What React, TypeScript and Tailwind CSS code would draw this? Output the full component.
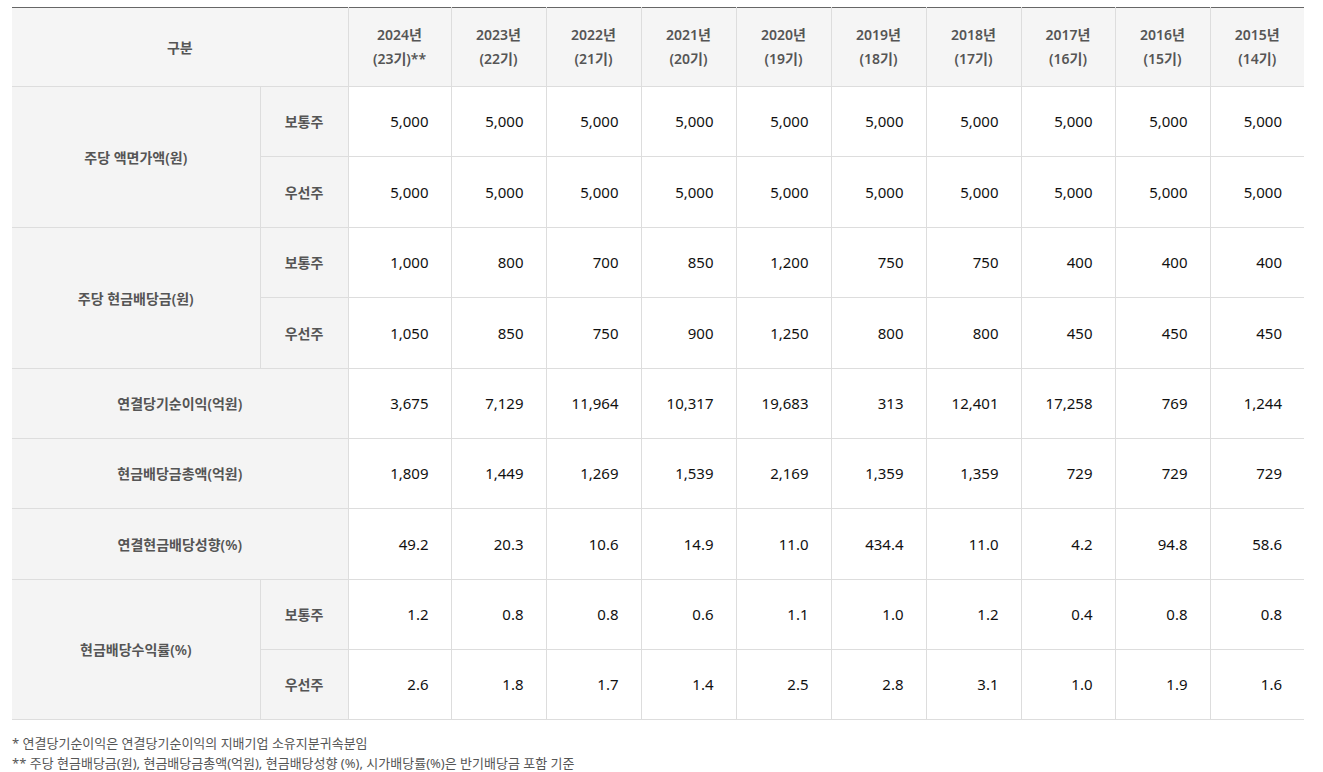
import type { ReactNode } from 'react'

const years = [
  ['2024년', '(23기)**'],
  ['2023년', '(22기)'],
  ['2022년', '(21기)'],
  ['2021년', '(20기)'],
  ['2020년', '(19기)'],
  ['2019년', '(18기)'],
  ['2018년', '(17기)'],
  ['2017년', '(16기)'],
  ['2016년', '(15기)'],
  ['2015년', '(14기)'],
]

const colWidths = [248, 88, 103, 95, 95, 95, 95, 95, 95, 94, 95, 94]

const rows = {
  faceCommon: ['5,000', '5,000', '5,000', '5,000', '5,000', '5,000', '5,000', '5,000', '5,000', '5,000'],
  facePref: ['5,000', '5,000', '5,000', '5,000', '5,000', '5,000', '5,000', '5,000', '5,000', '5,000'],
  divCommon: ['1,000', '800', '700', '850', '1,200', '750', '750', '400', '400', '400'],
  divPref: ['1,050', '850', '750', '900', '1,250', '800', '800', '450', '450', '450'],
  netIncome: ['3,675', '7,129', '11,964', '10,317', '19,683', '313', '12,401', '17,258', '769', '1,244'],
  divTotal: ['1,809', '1,449', '1,269', '1,539', '2,169', '1,359', '1,359', '729', '729', '729'],
  payout: ['49.2', '20.3', '10.6', '14.9', '11.0', '434.4', '11.0', '4.2', '94.8', '58.6'],
  yieldCommon: ['1.2', '0.8', '0.8', '0.6', '1.1', '1.0', '1.2', '0.4', '0.8', '0.8'],
  yieldPref: ['2.6', '1.8', '1.7', '1.4', '2.5', '2.8', '3.1', '1.0', '1.9', '1.6'],
}

// 라벨 셀 (구분 열)
const labelCls =
  'bg-[#f4f4f4] border-b border-r border-[#dddddd] text-center text-[14px] font-semibold text-[#555555]'

function Label({ children, rowSpan, colSpan }: { children: ReactNode; rowSpan?: number; colSpan?: number }) {
  return (
    <th rowSpan={rowSpan} colSpan={colSpan} className={labelCls}>
      {children}
    </th>
  )
}

function Values({ values }: { values: string[] }) {
  return (
    <>
      {values.map((v, i) => (
        <td
          key={i}
          className={
            'border-b border-[#dddddd] pr-[22px] text-right text-[15px] text-[#111111] ' +
            (i < values.length - 1 ? 'border-r' : '')
          }
        >
          {v}
        </td>
      ))}
    </>
  )
}

export default function App() {
  return (
    <div
      className="bg-white pt-[7px] pl-[12px] pr-[19px]"
      style={{ fontFamily: '"Noto Sans", "Noto Sans CJK KR", sans-serif' }}
    >
      <table className="w-[1292px] table-fixed border-collapse border-t border-[#666666]">
        <colgroup>
          {colWidths.map((w, i) => (
            <col key={i} style={{ width: w }} />
          ))}
        </colgroup>
        <thead>
          <tr className="h-[79px] bg-[#f5f5f5]">
            <th colSpan={2} className="border-b border-r border-[#dddddd] text-center text-[14px] font-semibold text-[#555555]">
              구분
            </th>
            {years.map(([y, p], i) => (
              <th
                key={y}
                className={
                  'border-b border-[#dddddd] text-center text-[14px] font-semibold leading-[24px] text-[#555555] ' +
                  (i < years.length - 1 ? 'border-r' : '')
                }
              >
                <div>{y}</div>
                <div>{p}</div>
              </th>
            ))}
          </tr>
        </thead>
        <tbody>
          <tr className="h-[70px]">
            <Label rowSpan={2}>주당 액면가액(원)</Label>
            <Label>보통주</Label>
            <Values values={rows.faceCommon} />
          </tr>
          <tr className="h-[71px]">
            <Label>우선주</Label>
            <Values values={rows.facePref} />
          </tr>
          <tr className="h-[70px]">
            <Label rowSpan={2}>주당 현금배당금(원)</Label>
            <Label>보통주</Label>
            <Values values={rows.divCommon} />
          </tr>
          <tr className="h-[71px]">
            <Label>우선주</Label>
            <Values values={rows.divPref} />
          </tr>
          <tr className="h-[70px]">
            <Label colSpan={2}>연결당기순이익(억원)</Label>
            <Values values={rows.netIncome} />
          </tr>
          <tr className="h-[70px]">
            <Label colSpan={2}>현금배당금총액(억원)</Label>
            <Values values={rows.divTotal} />
          </tr>
          <tr className="h-[71px]">
            <Label colSpan={2}>연결현금배당성향(%)</Label>
            <Values values={rows.payout} />
          </tr>
          <tr className="h-[70px]">
            <Label rowSpan={2}>현금배당수익률(%)</Label>
            <Label>보통주</Label>
            <Values values={rows.yieldCommon} />
          </tr>
          <tr className="h-[70px]">
            <Label>우선주</Label>
            <Values values={rows.yieldPref} />
          </tr>
        </tbody>
      </table>
      <div className="pt-[13px] text-[13px] leading-[20px] text-[#555555]">
        <p>* 연결당기순이익은 연결당기순이익의 지배기업 소유지분귀속분임</p>
        <p>** 주당 현금배당금(원), 현금배당금총액(억원), 현금배당성향 (%), 시가배당률(%)은 반기배당금 포함 기준</p>
      </div>
    </div>
  )
}
